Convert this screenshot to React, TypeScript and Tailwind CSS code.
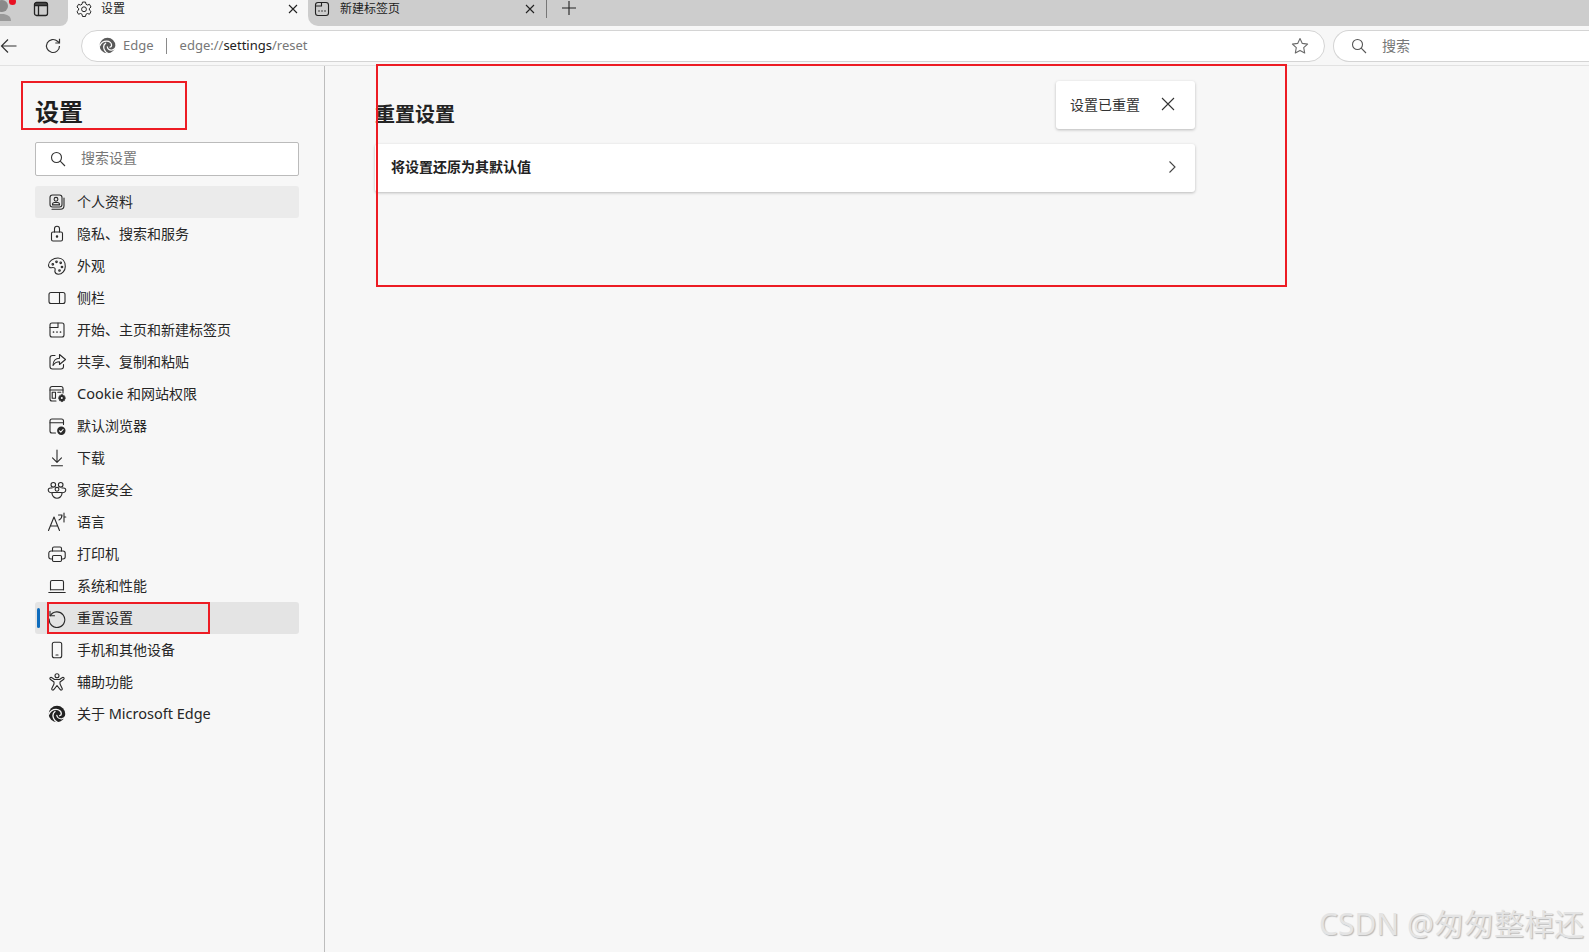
import React from "react";

const S = ({ children, size = 20 }: { children: React.ReactNode; size?: number }) => (
  <svg width={size} height={size} viewBox="0 0 20 20" fill="none" stroke="#2a2a2a" strokeWidth="1.1" strokeLinecap="round" strokeLinejoin="round">
    {children}
  </svg>
);

const EdgeLogo = ({ size = 18, color = "#222", gap = "#f7f7f7" }: { size?: number; color?: string; gap?: string }) => (
  <svg width={size} height={size} viewBox="0 0 20 20" fill="none" strokeLinecap="round">
    <circle cx="10" cy="10" r="9.200" fill={color} />
    <path d="M.8 10.500C2.500 6.500 6 4.800 9 4.800c3.500 0 5.800 2.500 5.800 4.800 0 1.300-.9 2-1.800 2.200" stroke={gap} strokeWidth="1.500" />
    <path d="M7.800 7.300C5.500 9 5 12 6.300 15c.9 2 2.400 3.500 4.200 4.300" stroke={gap} strokeWidth="1.500" />
    <path d="M9.800 11.500c.5 2.500 3 4.200 6 3.700 1.500-.3 3-1.200 3.700-2.700" stroke={gap} strokeWidth="1.400" />
  </svg>
);

const gear = "M15 10.500l.9.2.3 1 .9-.3.8.8-.4.9.8.4v1.200l-.8.4.4.9-.8.8-.9-.3-.3 1-1.100.1-.8-.1-.3-1-.9.3-.8-.8.4-.9-.8-.4V13.500l.8-.4-.4-.9.8-.8.9.3.3-1z";

const icons: React.ReactNode[] = [
  <S><rect x="3" y="3" width="12" height="12" rx="2.500" /><circle cx="9" cy="7.300" r="1.900" /><path d="M5.500 12.500c0-1.400 1-2 2-2h3c1 0 2 .6 2 2v.4h-7z" /><path d="M5 17.200h8.500c2 0 3.500-1.500 3.500-3.500V6" /></S>,
  <S><rect x="4.500" y="8" width="11" height="9" rx="1.500" /><path d="M7.500 8V4.800a2.500 2.500 0 0 1 5 0V8" /><circle cx="10" cy="12.500" r=".7" fill="#2a2a2a" /></S>,
  <S><path d="M11 2c-4.700 0-9.500 3.300-9.500 7.300 0 1.700 1.300 2.700 3 2.400 1.900-.3 3.300-.2 3.600 1 .3 1.200-.4 2-.2 3 .3 1.500 1.600 2.500 3.400 2.500 4 0 7-3.800 7-7.800C18.300 5.500 15.500 2 11 2z" /><circle cx="5.800" cy="8.300" r=".8" /><circle cx="9.500" cy="5.800" r=".8" /><circle cx="13.700" cy="6.800" r=".8" /><circle cx="15" cy="11" r=".8" /><circle cx="12.500" cy="14.500" r=".8" /></S>,
  <S><rect x="2" y="4.500" width="16" height="11" rx="2" /><path d="M12.500 4.500v11" /></S>,
  <S><rect x="3" y="3" width="14" height="14" rx="2" /><path d="M3 7.500h8V3" /><path d="M6.500 12h.01M10 12h.01M13.500 12h.01" strokeWidth="1.700" /></S>,
  <S><path d="M8 3.500H5.500a2.500 2.500 0 0 0-2.500 2.500v8.500A2.500 2.500 0 0 0 5.500 17h8.500a2.500 2.500 0 0 0 2.500-2.500V12.500" /><path d="M12.500 2.500l6 5-6 5V9.800c-3 0-5 1.200-6.500 3.700 0-4.500 2.800-7.300 6.500-7.300z" /></S>,
  <S><path d="M9 17H5a2 2 0 0 1-2-2V4.500a2 2 0 0 1 2-2h9a2 2 0 0 1 2 2V9" /><path d="M3 6h13" /><rect x="5.200" y="8.300" width="3.300" height="6" /><path d="M10.800 8.300h3" /><path d={gear} fill="#2a2a2a" stroke="#2a2a2a" strokeWidth=".6" /><circle cx="14.800" cy="14.100" r="1" fill="#fff" stroke="none" /></S>,
  <S><path d="M16.500 8.500V5a2 2 0 0 0-2-2h-9.500a2 2 0 0 0-2 2v10a2 2 0 0 0 2 2H8.500" /><path d="M3 6.800h13.500" /><circle cx="14.300" cy="14.800" r="4.200" fill="#2a2a2a" stroke="none" /><path d="M12.500 14.900l1.300 1.200 2.300-2.600" stroke="#fff" /></S>,
  <S><path d="M10 2v12M5.500 9.800L10 14.300l4.500-4.500M4.500 17.800h11" /></S>,
  <S><circle cx="6.300" cy="4.800" r="2.300" /><circle cx="13.700" cy="4.800" r="2.300" /><circle cx="10" cy="9.300" r="1.900" /><path d="M5 8H3.500C2 8 1 9 1.300 10.500c.3 1.500 1.700 2.300 3.700 2.300M15 8h1.500c1.500 0 2.500 1 2.200 2.500-.3 1.500-1.700 2.300-3.700 2.300" /><path d="M5 13.300c0 2.700 2.300 4.900 5 4.900s5-2.200 5-4.900c0-.5-.3-.8-.8-.8H5.800c-.5 0-.8.300-.8.800z" /></S>,
  <S><path d="M1.500 18.500L7 5l5.500 13.500M3.300 14h7.400" /><path d="M11.500 3h3.500c0 2.200-1 4-3 5M17 1v9M17 5h1.800" /></S>,
  <S><path d="M5.500 7V4.500a1.500 1.500 0 0 1 1.500-1.500h6a1.500 1.500 0 0 1 1.500 1.500V7" /><path d="M5.500 15H4a2.200 2.200 0 0 1-2.200-2.200V9.200A2.200 2.200 0 0 1 4 7h12a2.200 2.200 0 0 1 2.200 2.200v3.600A2.200 2.200 0 0 1 16 15h-1.500" /><rect x="5.500" y="11.500" width="9" height="6" rx="1.200" /></S>,
  <S><path d="M3.500 13.800V6a1.500 1.500 0 0 1 1.500-1.500h10A1.500 1.500 0 0 1 16.500 6v7.800" /><path d="M3.500 13.800h13" /><path d="M1.800 16.500h16.400" /></S>,
  <S><path d="M3.200 7.800A7.800 7.800 0 1 1 2.200 11" /><path d="M3 3.300v4.500h4.500" /></S>,
  <S><rect x="5.300" y="2.300" width="9.400" height="15.400" rx="2" /><path d="M9 15h2" /></S>,
  <S><circle cx="10" cy="3.800" r="2" /><path d="M3.500 5.500c-.7.400-.8 1.200-.3 1.700L7 10v2L4.800 16.500c-.3.800.1 1.300.8 1.500.6.200 1.100-.1 1.400-.7L10 13.500l3 3.800c.3.600.8.900 1.400.7.700-.2 1.100-.7.800-1.500L13 12v-2l3.800-2.800c.5-.5.400-1.300-.3-1.700-.5-.3-1-.2-1.500.2L12.500 7.500h-5L5 5.700c-.5-.4-1-.5-1.500-.2z" /></S>,
];

const labels: React.ReactNode[] = [
  "个人资料", "隐私、搜索和服务", "外观", "侧栏", "开始、主页和新建标签页", "共享、复制和粘贴",
  <><span className="text-[14.5px]">Cookie</span> 和网站权限</>,
  "默认浏览器", "下载", "家庭安全", "语言", "打印机", "系统和性能", "重置设置", "手机和其他设备", "辅助功能",
  <>关于 <span className="text-[14.5px]">Microsoft Edge</span></>,
];

const NavRow = ({ i }: { i: number }) => {
  const bg = i === 0 ? "bg-[#ebebeb]" : i === 13 ? "bg-[#e4e4e4]" : "";
  const nudge = i === 6 || i === 16 ? "pb-[2px]" : "";
  return (
    <div className={`h-8 flex items-center rounded-[3px] pl-[12px] ${bg} relative`}>
      {i === 13 && <div className="absolute left-[2px] top-[6px] w-[3px] h-[20px] rounded-full bg-[#0f6cbd]" />}
      <div className="w-5 h-5 flex items-center justify-center">
        {i === 16 ? <EdgeLogo size={18} color="#222" /> : icons[i]}
      </div>
      <span className={`ml-[10px] text-[14px] text-[#262626] leading-none ${nudge}`}>{labels[i]}</span>
    </div>
  );
};

const TabClose = () => (
  <svg width="12" height="12" viewBox="0 0 12 12" stroke="#222" strokeWidth="1.100" className="ml-auto"><path d="M2 2l8 8M10 2l-8 8" /></svg>
);

export default function App() {
  return (
    <div className="w-[1589px] h-[952px] overflow-hidden flex flex-col bg-[#f7f7f7] relative font-['Noto_Sans','Noto_Sans_CJK_SC',sans-serif]">
      {/* tab strip */}
      <div className="h-[26px] shrink-0 flex bg-[#f7f7f7]">
        <div className="w-[68px] bg-[#cdcdcd] rounded-br-[8px] relative overflow-hidden">
          <svg width="14" height="22" viewBox="0 0 14 22" className="absolute left-0 top-0">
            <circle cx="2" cy="6" r="6" fill="#8a8a8a" />
            <path d="M-6 21c0-5 3-7 8-7s9 2 9 7z" fill="#9a9a9a" />
          </svg>
          <div className="absolute left-[9px] top-[-2px] w-[7px] h-[7px] rounded-full bg-[#e81123]" />
          <svg width="16" height="16" viewBox="0 0 16 16" fill="none" stroke="#222" strokeWidth="1.300" className="absolute left-[33px] top-[1px]">
            <rect x="1.500" y="1.500" width="13" height="13" rx="2" />
            <path d="M1.500 4.500h13M5.500 4.500v10" />
            <path d="M1.500 3h13" />
          </svg>
        </div>
        <div className="w-[240px] flex items-center pl-[7px] pr-[9px] pb-[8px]">
          <svg width="18" height="18" viewBox="0 0 20 20" fill="none" stroke="#222" strokeWidth="1.100" strokeLinejoin="round">
            <path d="M8.300 2.300h3.400l.5 2.400 1.600.9 2.300-.8 1.700 3-1.800 1.600v1.800l1.800 1.600-1.700 3-2.300-.8-1.600.9-.5 2.400H8.300l-.5-2.400-1.600-.9-2.300.8-1.700-3 1.800-1.600V9.400L2.200 7.800l1.700-3 2.300.8 1.600-.9z" />
            <circle cx="10" cy="10.300" r="2.700" />
          </svg>
          <span className="ml-[8px] text-[12px] text-[#222] leading-none">设置</span>
          <TabClose />
        </div>
        <div className="flex-1 bg-[#cdcdcd] rounded-bl-[10px] flex">
          <div className="w-[238px] flex items-center pl-[6px] pr-[10px] pb-[8px]">
            <svg width="16" height="16" viewBox="0 0 16 16" fill="none" stroke="#222" strokeWidth="1.100">
              <rect x="1.500" y="1.500" width="13" height="13" rx="2.500" />
              <path d="M1.500 5h6V1.500" />
              <path d="M5 10h.01M8 10h.01M11 10h.01" strokeWidth="1.500" strokeLinecap="round" />
            </svg>
            <span className="ml-[10px] text-[12px] text-[#222] leading-none">新建标签页</span>
            <TabClose />
          </div>
          <div className="w-px h-[18px] bg-[#777]" />
          <svg width="16" height="16" viewBox="0 0 16 16" stroke="#222" strokeWidth="1.100" className="ml-[14px]"><path d="M8 1v14M1 8h14" /></svg>
        </div>
      </div>

      {/* toolbar */}
      <div className="h-[40px] shrink-0 flex items-center border-b border-[#e2e2e2] bg-[#f7f7f7]">
        <svg width="18" height="18" viewBox="0 0 18 18" fill="none" stroke="#333" strokeWidth="1.200">
          <path d="M1.500 9h15M8 2.500L1.500 9 8 15.500" />
        </svg>
        <svg width="18" height="18" viewBox="0 0 18 18" fill="none" stroke="#333" strokeWidth="1.200" className="ml-[26px]">
          <path d="M15.500 9a6.500 6.500 0 1 1-2-4.700L15.500 6" />
          <path d="M15.500 1.800V6h-4.200" />
        </svg>
        <div className="ml-[19px] w-[1244px] h-[32px] bg-white rounded-full border border-[#d4d4d4] flex items-center pl-[17px] pr-[14px]">
          <EdgeLogo size={17} color="#5a5a5a" gap="#ffffff" />
          <span className="ml-[7px] text-[13px] text-[#777] leading-none">Edge</span>
          <div className="ml-[12px] w-px h-[16px] bg-[#8a8a8a]" />
          <span className="ml-[13px] text-[13px] text-[#777] leading-none">edge://<span className="text-[#222]">settings</span>/reset</span>
          <svg width="20" height="20" viewBox="0 0 20 20" fill="none" stroke="#6a6a6a" strokeWidth="1.100" strokeLinejoin="round" className="ml-auto">
            <path d="M10 2.500l2.300 4.900 5.300.7-3.900 3.600 1 5.300L10 14.400 5.300 17l1-5.300L2.400 8.100l5.300-.7z" />
          </svg>
        </div>
        <div className="ml-[8px] flex-1 h-[32px] bg-white rounded-l-full border border-r-0 border-[#d4d4d4] flex items-center pl-[16px]">
          <svg width="18" height="18" viewBox="0 0 18 18" fill="none" stroke="#555" strokeWidth="1.100"><circle cx="7.500" cy="7.500" r="5" /><path d="M11.200 11.200L16 16" /></svg>
          <span className="ml-[14px] text-[14px] text-[#777] leading-none">搜索</span>
        </div>
      </div>

      <div className="flex-1 flex min-h-0">
        {/* sidebar */}
        <aside className="w-[325px] shrink-0 border-r border-[#bdbdbd] pl-[35px] pr-[25px]">
          <h1 className="mt-[28px] h-[36px] text-[24px] leading-[36px] font-bold text-[#1f1f1f]">设置</h1>
          <div className="mt-[12px] h-[34px] bg-white border border-[#bbbbbb] rounded-[2px] flex items-center pl-[13px]">
            <svg width="18" height="18" viewBox="0 0 18 18" fill="none" stroke="#333" strokeWidth="1.100"><circle cx="7.500" cy="7.500" r="5" /><path d="M11.200 11.200L16 16" /></svg>
            <span className="ml-[14px] pb-[2px] text-[14px] text-[#777] leading-none">搜索设置</span>
          </div>
          <nav className="mt-[10px] flex flex-col">
            {labels.map((_, i) => <NavRow key={i} i={i} />)}
          </nav>
        </aside>

        {/* main */}
        <main className="flex-1 pl-[50px] relative">
          <h2 className="mt-[32px] h-[34px] text-[20px] leading-[34px] font-bold text-[#242424]">重置设置</h2>
          <div className="mt-[12px] w-[820px] h-[48px] bg-white rounded-[3px] shadow-[0_1px_3px_rgba(0,0,0,0.25)] flex items-center pl-[16px] pr-[16px] pb-[2px]">
            <span className="text-[14px] font-bold text-[#222] leading-none">将设置还原为其默认值</span>
            <svg width="14" height="14" viewBox="0 0 14 14" fill="none" stroke="#444" strokeWidth="1.100" className="ml-auto"><path d="M4.500 1.500L10 7l-5.500 5.500" /></svg>
          </div>
          <div className="absolute left-[731px] top-[15px] w-[139px] h-[48px] bg-white rounded-[3px] shadow-[0_1px_3px_rgba(0,0,0,0.25)] flex items-center pl-[14px]">
            <span className="text-[14px] text-[#333] leading-none">设置已重置</span>
            <svg width="14" height="14" viewBox="0 0 14 14" stroke="#333" strokeWidth="1.100" className="ml-[21px] -mt-[2px]"><path d="M1 1l12 12M13 1L1 13" /></svg>
          </div>
        </main>
      </div>

      {/* red annotation boxes */}
      <div className="absolute left-[21px] top-[81px] w-[166px] h-[49px] border-2 border-[#ed1c24]" />
      <div className="absolute left-[47px] top-[602px] w-[163px] h-[32px] border-2 border-[#ed1c24]" />
      <div className="absolute left-[376px] top-[64px] w-[911px] h-[223px] border-2 border-[#ed1c24]" />

      {/* watermark */}
      <div className="absolute left-[1319px] top-[902px] text-[30px] leading-[44px] whitespace-nowrap text-[#e4e4e4] [text-shadow:1px_1px_1px_#b8b8b8]">CSDN @匆匆整棹还</div>
    </div>
  );
}
